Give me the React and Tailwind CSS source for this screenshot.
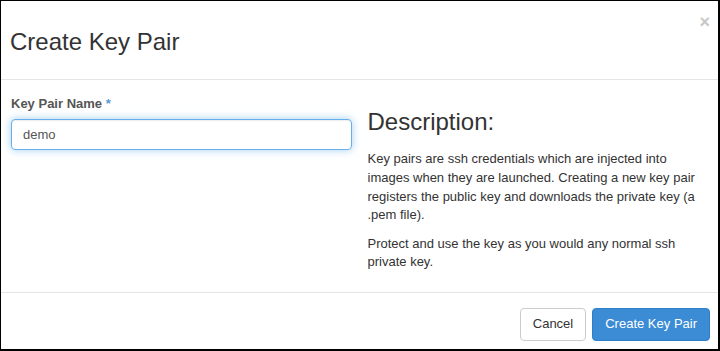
export default function App() {
  return (
    <div
      className="w-[720px] h-[351px] bg-white border-t border-l border-r-2 border-b-2 border-black flex flex-col text-[13px] leading-[18.57px] text-[#333]"
      style={{ fontFamily: '"Liberation Sans", Arial, sans-serif' }}
    >
      {/* Header */}
      <div className="relative h-[79px] shrink-0 border-b border-[#e5e5e5] px-[9px] pt-[28px]">
        <h3 className="text-[24px] leading-[26.4px] text-[#333] font-normal">Create Key Pair</h3>
        <button className="absolute right-[8px] top-[12px] text-[18px] font-bold leading-none text-[#c8c8c8]">
          ×
        </button>
      </div>

      {/* Body */}
      <div className="flex-1 grid grid-cols-2 gap-[16px] px-[10px] pt-[15px]">
        <div>
          <label className="block font-bold text-[#555] mb-[5px]">
            Key Pair Name <span className="text-[#5b9bd1]">*</span>
          </label>
          <input
            type="text"
            defaultValue="demo"
            className="w-full h-[31px] px-[11px] rounded-[4px] border border-[#66afe9] text-[#555] text-[13px] outline-none shadow-[inset_0_1px_1px_rgba(0,0,0,0.075),0_0_8px_rgba(102,175,233,0.6)]"
            style={{ fontFamily: '"Liberation Sans", Arial, sans-serif' }}
          />
        </div>
        <div>
          <h3 className="text-[24px] leading-[26.4px] text-[#333] mt-[14px] mb-[15px]">Description:</h3>
          <p className="mb-[10px]">
            Key pairs are ssh credentials which are injected into images when they are launched. Creating a new key pair registers the public key and downloads the private key (a .pem file).
          </p>
          <p>Protect and use the key as you would any normal ssh private key.</p>
        </div>
      </div>

      {/* Footer */}
      <div className="h-[57px] shrink-0 border-t border-[#e5e5e5] flex justify-end items-start gap-[6px] pr-[8px] pt-[15px]">
        <button className="h-[33px] px-[12px] rounded-[4px] border border-[#ccc] bg-white text-[#333] text-[13px]">
          Cancel
        </button>
        <button className="h-[33px] px-[12px] rounded-[4px] border border-[#2f7fc8] bg-[#3b8bd5] text-white text-[13px]">
          Create Key Pair
        </button>
      </div>
    </div>
  );
}
